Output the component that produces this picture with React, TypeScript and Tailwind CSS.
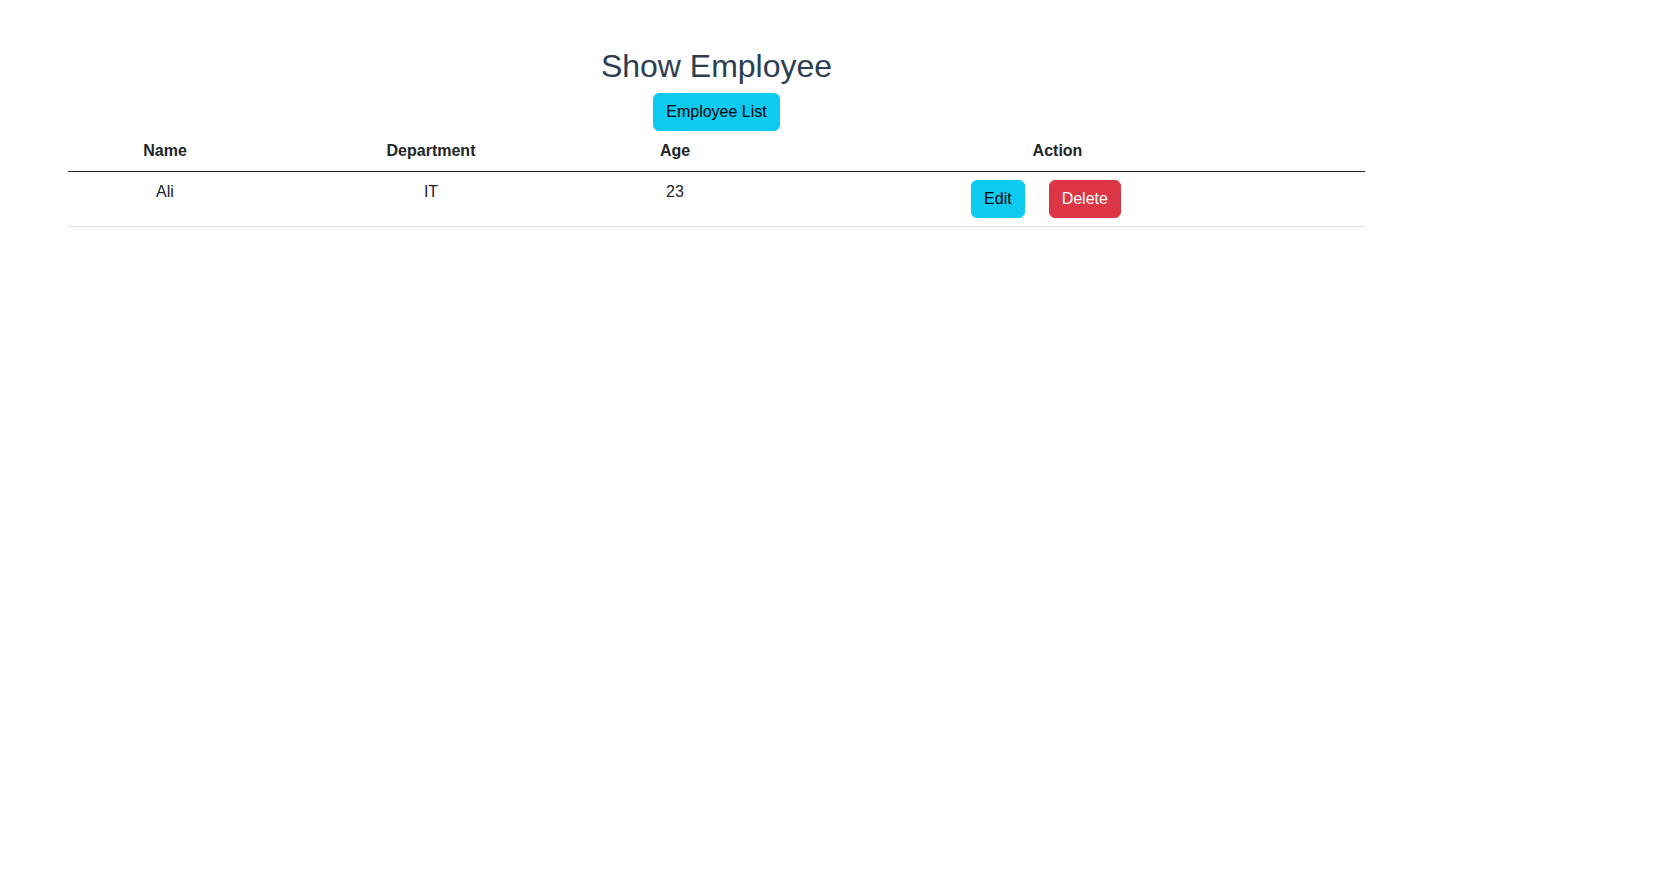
import React from "react";

export default function App() {
  const font = { fontFamily: '"Liberation Sans", Arial, Helvetica, sans-serif' };
  return (
    <div className="min-h-screen bg-white" style={font}>
      <div className="ml-[68px] w-[1297px] pt-[47px] text-center text-[#2c3e50]">
        <h2 className="m-0 mb-2 text-[32px] leading-[38.4px] font-normal text-[#2c3e50]">
          Show Employee
        </h2>
        <div className="flex justify-center">
          <button className="h-[38px] rounded-[6px] border border-[#0dcaf0] bg-[#0dcaf0] px-3 text-[16px] leading-6 text-black">
            Employee List
          </button>
        </div>
        <table className="w-full border-collapse text-[16px] leading-6 text-[#212529]">
          <colgroup>
            <col className="w-[194px]" />
            <col className="w-[338px]" />
            <col className="w-[150px]" />
            <col />
          </colgroup>
          <thead>
            <tr>
              <th className="border-b border-[#212529] px-2 py-2 text-center font-bold">Name</th>
              <th className="border-b border-[#212529] px-2 py-2 text-center font-bold">Department</th>
              <th className="border-b border-[#212529] px-2 py-2 text-center font-bold">Age</th>
              <th className="border-b border-[#212529] px-2 py-2 text-center font-bold">Action</th>
            </tr>
          </thead>
          <tbody>
            <tr>
              <td className="border-b border-[#dee2e6] px-2 py-2 text-center align-top">Ali</td>
              <td className="border-b border-[#dee2e6] px-2 py-2 text-center align-top">IT</td>
              <td className="border-b border-[#dee2e6] px-2 py-2 text-center align-top">23</td>
              <td className="border-b border-[#dee2e6] px-2 py-2 text-center align-top">
                <div className="flex justify-center">
                  <button className="mr-[24px] h-[38px] rounded-[6px] border border-[#0dcaf0] bg-[#0dcaf0] px-3 text-[16px] leading-6 text-black">
                    Edit
                  </button>
                  <button className="mr-[23px] h-[38px] rounded-[6px] border border-[#dc3545] bg-[#dc3545] px-3 text-[16px] leading-6 text-white">
                    Delete
                  </button>
                </div>
              </td>
            </tr>
          </tbody>
        </table>
      </div>
    </div>
  );
}
